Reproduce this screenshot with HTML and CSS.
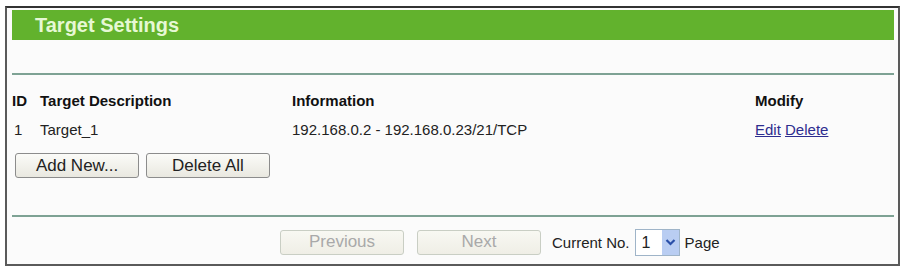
FILE: index.html
```html
<!DOCTYPE html>
<html>
<head>
<meta charset="utf-8">
<link rel="stylesheet" href="styles.css">
</head>
<body>
<div class="panel">
  <div class="title">Target Settings</div>
  <div class="spacer"></div>
  <div class="rule"></div>
  <div class="row head">
    <span>ID</span><span>Target Description</span><span>Information</span><span>Modify</span>
  </div>
  <div class="row data">
    <span>1</span><span>Target_1</span><span>192.168.0.2 - 192.168.0.23/21/TCP</span><span><a href="#">Edit</a> <a href="#">Delete</a></span>
  </div>
  <div class="actions">
    <button class="btn">Add New...</button>
    <button class="btn">Delete All</button>
  </div>
  <div class="rule rule2"></div>
  <div class="pager">
    <button class="btn off">Previous</button>
    <button class="btn off">Next</button>
    <span class="cur">Current No.</span>
    <span class="sel"><span class="val">1</span><span class="arrow"><svg width="13" height="10" viewBox="0 0 13 10"><path d="M2.5 3 L6.5 7 L10.5 3" fill="none" stroke="#2a4fa8" stroke-width="2.2"/></svg></span></span>
    <span class="pg">Page</span>
  </div>
</div>
</body>
</html>
```
FILE: styles.css
```css
html, body {
  margin: 0;
  padding: 0;
  background: #ffffff;
}
body {
  font-family: "Liberation Sans", Arial, sans-serif;
  font-size: 15px;
  color: #222;
  width: 900px;
  height: 270px;
  overflow: hidden;
}
.panel {
  margin: 6px 0 0 5px;
  width: 886px;
  height: 254px;
  border: 2px solid #5a5a5a;
  border-top-color: #333;
  background: #fbfbfb;
  padding: 2px 0 0 5px;
  box-sizing: content-box;
}
.title {
  height: 30px;
  width: 882px;
  background: #62b22d;
  color: #e6f8d4;
  font-weight: bold;
  font-size: 20px;
  line-height: 30px;
  padding-left: 23px;
  box-sizing: border-box;
}
.spacer {
  height: 33px;
}
.rule {
  height: 2px;
  width: 882px;
  background: #7ea294;
}
.row {
  display: grid;
  grid-template-columns: 28px 252px 463px 1fr;
  align-items: center;
}
.row.head {
  margin-top: 15px;
  height: 20px;
  font-weight: bold;
  font-size: 15px;
  color: #111;
}
.row.data {
  margin-top: 9px;
  height: 20px;
  font-size: 15px;
  color: #222;
}
.row.data span:first-child {
  padding-left: 2px;
}
.row.data a {
  color: #2d2d8f;
}
.actions {
  display: flex;
  gap: 7px;
  margin-top: 14px;
  padding-left: 3px;
}
.btn {
  font-family: "Liberation Sans", Arial, sans-serif;
  font-size: 17px;
  width: 124px;
  height: 25px;
  padding: 0;
  border: 1px solid #8c8c8c;
  border-radius: 3px;
  background: linear-gradient(#fbfbf8, #e9e8e0);
  color: #222;
}
.rule2 {
  margin-top: 37px;
}
.pager {
  display: flex;
  align-items: center;
  margin-top: 12px;
  padding-left: 268px;
  height: 26px;
}
.btn.off {
  width: 124px;
  height: 25px;
  border-color: #c9cec4;
  background: linear-gradient(#f8f8f2, #efeee6);
  color: #a9a9a9;
}
.btn.off + .btn.off {
  margin-left: 13px;
}
.cur {
  margin-left: 11px;
  color: #222;
}
.sel {
  margin-left: 5px;
  display: inline-flex;
  height: 27px;
  border: 1px solid #9fb4c8;
  background: #fff;
  box-sizing: border-box;
}
.sel .val {
  width: 26px;
  padding-left: 6px;
  line-height: 25px;
  box-sizing: border-box;
  font-size: 16px;
}
.sel .arrow {
  width: 17px;
  background: #b9cdf2;
  display: flex;
  align-items: center;
  justify-content: center;
}
.pg {
  margin-left: 5px;
}
```
